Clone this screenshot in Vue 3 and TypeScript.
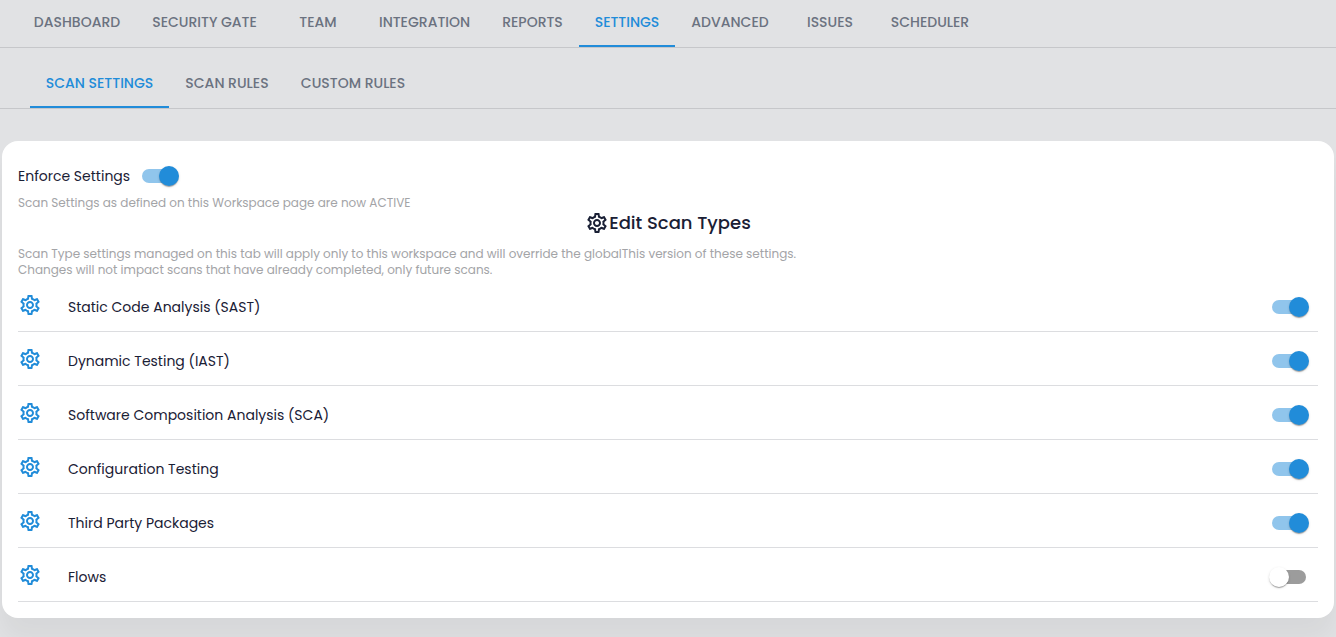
<script setup lang="ts">
import { ref } from 'vue'

interface ScanType {
  id: string
  label: string
  enabled: boolean
}

const mainTabs = [
  'Dashboard',
  'Security Gate',
  'Team',
  'Integration',
  'Reports',
  'Settings',
  'Advanced',
  'Issues',
  'Scheduler',
]
const subTabs = ['Scan Settings', 'Scan Rules', 'Custom Rules']

const activeMain = ref('Settings')
const activeSub = ref('Scan Settings')
const enforce = ref(true)

const scanTypes = ref<ScanType[]>([
  { id: 'sast', label: 'Static Code Analysis (SAST)', enabled: true },
  { id: 'iast', label: 'Dynamic Testing (IAST)', enabled: true },
  { id: 'sca', label: 'Software Composition Analysis (SCA)', enabled: true },
  { id: 'config', label: 'Configuration Testing', enabled: true },
  { id: 'packages', label: 'Third Party Packages', enabled: true },
  { id: 'flows', label: 'Flows', enabled: false },
])
</script>

<template>
  <svg class="sprite" aria-hidden="true">
    <symbol id="gear" viewBox="0 0 24 24">
      <path
        d="M19.43 12.98c.04-.32.07-.64.07-.98 0-.34-.03-.66-.07-.98l2.11-1.65c.19-.15.24-.42.12-.64l-2-3.46c-.09-.16-.26-.25-.44-.25-.06 0-.12.01-.17.03l-2.49 1c-.52-.4-1.08-.73-1.69-.98l-.38-2.65C14.46 2.18 14.25 2 14 2h-4c-.25 0-.46.18-.49.42l-.38 2.65c-.61.25-1.17.59-1.69.98l-2.49-1c-.06-.02-.12-.03-.18-.03-.17 0-.34.09-.43.25l-2 3.46c-.13.22-.07.49.12.64l2.11 1.65c-.04.32-.07.65-.07.98 0 .33.03.66.07.98l-2.11 1.65c-.19.15-.24.42-.12.64l2 3.46c.09.16.26.25.44.25.06 0 .12-.01.17-.03l2.49-1c.52.4 1.08.73 1.69.98l.38 2.65c.03.24.24.42.49.42h4c.25 0 .46-.18.49-.42l.38-2.65c.61-.25 1.17-.59 1.69-.98l2.49 1c.06.02.12.03.18.03.17 0 .34-.09.43-.25l2-3.46c.12-.22.07-.49-.12-.64l-2.11-1.65zm-1.98-1.71c.04.31.05.52.05.73 0 .21-.02.43-.05.73l-.14 1.13.89.7 1.08.84-.7 1.21-1.27-.51-1.04-.42-.9.68c-.43.32-.84.56-1.25.73l-1.06.43-.16 1.13-.2 1.35h-1.4l-.19-1.35-.16-1.13-1.06-.43c-.43-.18-.83-.41-1.23-.71l-.91-.7-1.06.43-1.27.51-.7-1.21 1.08-.84.89-.7-.14-1.13c-.03-.31-.05-.54-.05-.74s.02-.43.05-.73l.14-1.13-.89-.7-1.08-.84.7-1.21 1.27.51 1.04.42.9-.68c.43-.32.84-.56 1.25-.73l1.06-.43.16-1.13.2-1.35h1.39l.19 1.35.16 1.13 1.06.43c.43.18.83.41 1.23.71l.91.7 1.06-.43 1.27-.51.7 1.21-1.07.85-.89.7.14 1.13zM12 8c-2.21 0-4 1.79-4 4s1.79 4 4 4 4-1.79 4-4-1.79-4-4-4zm0 6c-1.1 0-2-.9-2-2s.9-2 2-2 2 .9 2 2-.9 2-2 2z"
      />
    </symbol>
  </svg>

  <nav class="tabs main-tabs" aria-label="Workspace">
    <button
      v-for="tab in mainTabs"
      :key="tab"
      type="button"
      class="tab"
      :class="{ active: tab === activeMain }"
      @click="activeMain = tab"
    >
      {{ tab }}
    </button>
  </nav>

  <nav class="tabs sub-tabs" aria-label="Settings">
    <button
      v-for="tab in subTabs"
      :key="tab"
      type="button"
      class="tab"
      :class="{ active: tab === activeSub }"
      @click="activeSub = tab"
    >
      {{ tab }}
    </button>
  </nav>

  <main class="card">
    <div class="enforce">
      <label for="enforce">Enforce Settings</label>
      <input id="enforce" v-model="enforce" class="switch" type="checkbox" role="switch" />
    </div>
    <p class="hint">Scan Settings as defined on this Workspace page are now ACTIVE</p>

    <h1 class="title">
      <svg class="icon" aria-hidden="true"><use href="#gear" /></svg>
      <span>Edit Scan Types</span>
    </h1>

    <p class="hint">
      Scan Type settings managed on this tab will apply only to this workspace and will override the
      globalThis version of these settings.<br />
      Changes will not impact scans that have already completed, only future scans.
    </p>

    <ul class="types">
      <li v-for="item in scanTypes" :key="item.id" class="type">
        <svg class="icon" aria-hidden="true"><use href="#gear" /></svg>
        <label :for="item.id">{{ item.label }}</label>
        <input :id="item.id" v-model="item.enabled" class="switch" type="checkbox" role="switch" />
      </li>
    </ul>
  </main>
</template>

<style>
body {
  background: #e1e2e4;
  color: #1a2035;
  font-family: Poppins, Inter, 'Open Sans', sans-serif;
  font-size: 14px;
}
</style>

<style scoped>
.sprite {
  display: none;
}

.tabs {
  display: grid;
  border-bottom: 1px solid #c6c7ca;
}

.main-tabs {
  grid-template-columns: 118px 137px 90px 123px 93px 96px 110px 90px 110px;
  padding-left: 18px;
}

.sub-tabs {
  grid-template-columns: 139px 116px 136px;
  padding: 12px 0 0 30px;
}

.tab {
  height: 47px;
  padding: 0 0 1px;
  border: 0;
  border-bottom: 2px solid transparent;
  background: none;
  color: #6b7280;
  font: inherit;
  font-weight: 500;
  line-height: 20px;
  text-transform: uppercase;
  white-space: nowrap;
  cursor: pointer;
}

.sub-tabs .tab {
  height: 48px;
}

.tab.active {
  border-bottom-color: #218cd9;
  color: #218cd9;
}

.card {
  margin: 32px 2px 19px;
  padding: 16px;
  border-radius: 16px;
  background: #fff;
  box-shadow: 0 20px 27px rgba(0, 0, 0, 0.05);
}

.enforce {
  display: flex;
  align-items: center;
}

.hint {
  margin: 0;
  color: #a3a4a7;
  font-size: 12px;
  line-height: 16px;
}

.title {
  display: flex;
  align-items: center;
  justify-content: center;
  height: 35px;
  margin: 0;
  padding-bottom: 11px;
  box-sizing: border-box;
  font-size: 18px;
  font-weight: 500;
  line-height: 24px;
}

.icon {
  flex: none;
  width: 24px;
  height: 24px;
  fill: currentColor;
}

.types {
  margin: 0;
  padding: 0;
  list-style: none;
}

.type {
  display: flex;
  align-items: center;
  padding: 10px 0 5px;
  border-bottom: 1px solid #dcdde0;
}

.type .icon {
  align-self: flex-start;
  margin: 5px 26px 0 0;
  color: #218cd9;
}

.type label {
  flex: 1;
}

.switch {
  appearance: none;
  flex: none;
  display: flex;
  align-items: center;
  width: 58px;
  height: 38px;
  margin: 0;
  padding: 12px;
  box-sizing: border-box;
  cursor: pointer;
}

.switch::before {
  content: '';
  flex: none;
  width: 34px;
  height: 14px;
  border-radius: 7px;
  background: #9c9c9c;
}

.switch::after {
  content: '';
  flex: none;
  width: 20px;
  height: 20px;
  margin-left: -37px;
  border-radius: 50%;
  background: #fff;
  box-shadow:
    0 2px 1px -1px rgba(0, 0, 0, 0.2),
    0 1px 1px rgba(0, 0, 0, 0.14),
    0 1px 3px rgba(0, 0, 0, 0.12);
}

.switch:checked::before {
  background: #90c5ec;
}

.switch:checked::after {
  margin-left: -17px;
  background: #218cd9;
}
</style>
